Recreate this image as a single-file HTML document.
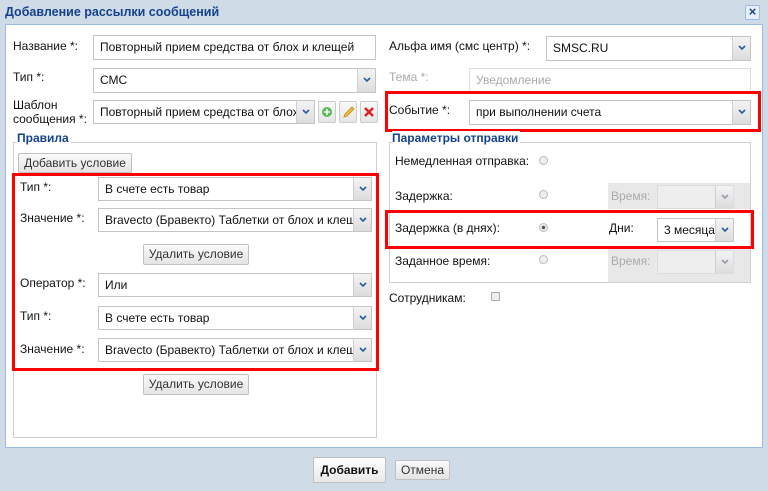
<!DOCTYPE html>
<html><head><meta charset="utf-8"><style>
*{box-sizing:border-box;margin:0;padding:0}
body{width:768px;height:491px;background:#cfdbe7;font-family:"Liberation Sans",Arial,sans-serif;font-size:12px;color:#111;position:relative;overflow:hidden}
.a{position:absolute}
.title{left:5px;top:5px;font-weight:bold;color:#15428b;font-size:12.5px}
.close{left:745px;top:5px;width:15px;height:15px;border:1px solid #99bbe8;background:#e8eff8;color:#15428b;font-weight:bold;font-size:13px;line-height:12px;text-align:center;border-radius:2px}
.body{left:5px;top:24px;width:758px;height:424px;background:#fff;border:1px solid #99bbe8}
.inp{border:1px solid #c5c5c5;background:#fff;padding-left:6px;line-height:22px;white-space:nowrap;overflow:hidden;font-size:12px}
.sel{border:1px solid #c5c5c5;background:#fff;padding-left:6px;line-height:22px;white-space:nowrap;overflow:hidden;font-size:12px}
.sel::after{content:"";position:absolute;right:0;top:0;bottom:0;width:17px;background:linear-gradient(#f4f4f4,#dcdcdc);border-left:1px solid #d0d0d0}
.arr{position:absolute;right:4px;top:8px;width:8px;height:6px;z-index:2}
.lbl{font-size:12px}
.fs{border:1px solid #d0d0d0}
.leg{font-weight:bold;color:#15428b;background:#fff;padding-right:2px}
.btn{border:1px solid #c0c0c0;border-radius:2px;background:linear-gradient(#fafafa,#e4e4e4);text-align:center;font-size:12px;color:#333}
.red{border:3px solid #f00}
.radio{width:9px;height:9px;border-radius:50%;border:1px solid #bbb;background:#eee}
.gray{background:#e8e8e8}
.ib{width:18px;height:22px;border:1px solid #ccc;border-radius:2px;background:linear-gradient(#fafafa,#e6e6e6)}
</style></head><body>
<div class="a title">Добавление рассылки сообщений</div>
<div class="a close">×</div>
<div class="a body"></div>

<div class="a lbl" style="left:13px;top:39px">Название *:</div>
<div class="a inp" style="left:93px;top:35px;width:283px;height:25px">Повторный прием средства от блох и клещей</div>
<div class="a lbl" style="left:13px;top:70px">Тип *:</div>
<div class="a sel" style="left:93px;top:68px;width:283px;height:25px">СМС<svg class="arr" viewBox="0 0 8 6"><path d="M1 1l3 3 3-3" stroke="#2a5aa0" stroke-width="1.6" fill="none"/></svg></div>
<div class="a lbl" style="left:13px;top:98px;line-height:14px">Шаблон<br>сообщения *:</div>
<div class="a sel" style="left:93px;top:100px;width:222px;height:24px">Повторный прием средства от блох<svg class="arr" viewBox="0 0 8 6"><path d="M1 1l3 3 3-3" stroke="#2a5aa0" stroke-width="1.6" fill="none"/></svg></div>
<div class="a ib" style="left:318px;top:101px"><svg width="16" height="20"><circle cx="8" cy="10" r="5" fill="#5cb85c"/><path d="M8 7v6M5 10h6" stroke="#fff" stroke-width="1.5"/></svg></div>
<div class="a ib" style="left:339px;top:101px"><svg width="16" height="20"><path d="M4 15l1-3 7-7 2 2-7 7z" fill="#f0c040" stroke="#c08a20" stroke-width=".8"/></svg></div>
<div class="a ib" style="left:360px;top:101px"><svg width="16" height="20"><path d="M4 6l8 8M12 6l-8 8" stroke="#e02020" stroke-width="2.5"/></svg></div>

<div class="a fs" style="left:13px;top:142px;width:364px;height:296px"></div>
<div class="a leg" style="left:17px;top:131px">Правила</div>
<div class="a btn" style="left:18px;top:153px;width:114px;height:20px;line-height:18px">Добавить условие</div>
<div class="a red" style="left:12px;top:173px;width:367px;height:198px"></div>
<div class="a lbl" style="left:20px;top:180px">Тип *:</div>
<div class="a sel" style="left:98px;top:177px;width:274px;height:24px">В счете есть товар<svg class="arr" viewBox="0 0 8 6"><path d="M1 1l3 3 3-3" stroke="#2a5aa0" stroke-width="1.6" fill="none"/></svg></div>
<div class="a lbl" style="left:20px;top:211px">Значение *:</div>
<div class="a sel" style="left:98px;top:208px;width:274px;height:24px">Bravecto (Бравекто) Таблетки от блох и клещ<svg class="arr" viewBox="0 0 8 6"><path d="M1 1l3 3 3-3" stroke="#2a5aa0" stroke-width="1.6" fill="none"/></svg></div>
<div class="a btn" style="left:143px;top:244px;width:106px;height:21px;line-height:19px">Удалить условие</div>
<div class="a lbl" style="left:20px;top:276px">Оператор *:</div>
<div class="a sel" style="left:98px;top:273px;width:274px;height:24px">Или<svg class="arr" viewBox="0 0 8 6"><path d="M1 1l3 3 3-3" stroke="#2a5aa0" stroke-width="1.6" fill="none"/></svg></div>
<div class="a lbl" style="left:20px;top:309px">Тип *:</div>
<div class="a sel" style="left:98px;top:306px;width:274px;height:24px">В счете есть товар<svg class="arr" viewBox="0 0 8 6"><path d="M1 1l3 3 3-3" stroke="#2a5aa0" stroke-width="1.6" fill="none"/></svg></div>
<div class="a lbl" style="left:20px;top:342px">Значение *:</div>
<div class="a sel" style="left:98px;top:338px;width:274px;height:24px">Bravecto (Бравекто) Таблетки от блох и клещ<svg class="arr" viewBox="0 0 8 6"><path d="M1 1l3 3 3-3" stroke="#2a5aa0" stroke-width="1.6" fill="none"/></svg></div>
<div class="a btn" style="left:143px;top:374px;width:106px;height:21px;line-height:19px">Удалить условие</div>

<div class="a lbl" style="left:389px;top:39px">Альфа имя (смс центр) *:</div>
<div class="a sel" style="left:546px;top:36px;width:205px;height:25px">SMSC.RU<svg class="arr" viewBox="0 0 8 6"><path d="M1 1l3 3 3-3" stroke="#2a5aa0" stroke-width="1.6" fill="none"/></svg></div>
<div class="a lbl" style="left:389px;top:70px;color:#aaa">Тема *:</div>
<div class="a inp" style="left:469px;top:68px;width:282px;height:24px;color:#aaa;border-color:#ddd">Уведомление</div>
<div class="a red" style="left:385px;top:91px;width:376px;height:41px"></div>
<div class="a lbl" style="left:389px;top:103px">Событие *:</div>
<div class="a sel" style="left:469px;top:100px;width:282px;height:25px">при выполнении счета<svg class="arr" viewBox="0 0 8 6"><path d="M1 1l3 3 3-3" stroke="#2a5aa0" stroke-width="1.6" fill="none"/></svg></div>

<div class="a fs" style="left:389px;top:142px;width:362px;height:141px"></div>
<div class="a leg" style="left:392px;top:131px">Параметры отправки</div>
<div class="a lbl" style="left:395px;top:154px">Немедленная отправка:</div>
<div class="a radio" style="left:539px;top:156px"></div>
<div class="a gray" style="left:608px;top:183px;width:142px;height:26px"></div>
<div class="a gray" style="left:608px;top:247px;width:142px;height:35px"></div>
<div class="a lbl" style="left:395px;top:189px">Задержка:</div>
<div class="a radio" style="left:539px;top:190px"></div>
<div class="a lbl" style="left:611px;top:189px;color:#aaa">Время:</div>
<div class="a sel" style="left:657px;top:185px;width:77px;height:24px;background:#eee;border-color:#ddd"><svg class="arr" viewBox="0 0 8 6"><path d="M1 1l3 3 3-3" stroke="#99a" stroke-width="1.6" fill="none"/></svg></div>
<div class="a red" style="left:385px;top:210px;width:369px;height:39px"></div>
<div class="a lbl" style="left:395px;top:221px">Задержка (в днях):</div>
<div class="a radio" style="left:539px;top:223px;background:radial-gradient(#555 30%,#eee 40%)"></div>
<div class="a lbl" style="left:609px;top:221px">Дни:</div>
<div class="a sel" style="left:657px;top:218px;width:77px;height:24px">3 месяца<svg class="arr" viewBox="0 0 8 6"><path d="M1 1l3 3 3-3" stroke="#2a5aa0" stroke-width="1.6" fill="none"/></svg></div>
<div class="a lbl" style="left:395px;top:254px">Заданное время:</div>
<div class="a radio" style="left:539px;top:255px"></div>
<div class="a lbl" style="left:611px;top:254px;color:#aaa">Время:</div>
<div class="a sel" style="left:657px;top:250px;width:77px;height:24px;background:#eee;border-color:#ddd"><svg class="arr" viewBox="0 0 8 6"><path d="M1 1l3 3 3-3" stroke="#99a" stroke-width="1.6" fill="none"/></svg></div>
<div class="a lbl" style="left:389px;top:291px">Сотрудникам:</div>
<div class="a" style="left:491px;top:292px;width:9px;height:9px;border:1px solid #aaa;background:#eee;border-radius:1px"></div>

<div class="a btn" style="left:313px;top:457px;width:73px;height:26px;line-height:24px;font-weight:bold;color:#111;background:linear-gradient(#fff,#e8e8e8)">Добавить</div>
<div class="a btn" style="left:395px;top:460px;width:55px;height:20px;line-height:18px">Отмена</div>
</body></html>
